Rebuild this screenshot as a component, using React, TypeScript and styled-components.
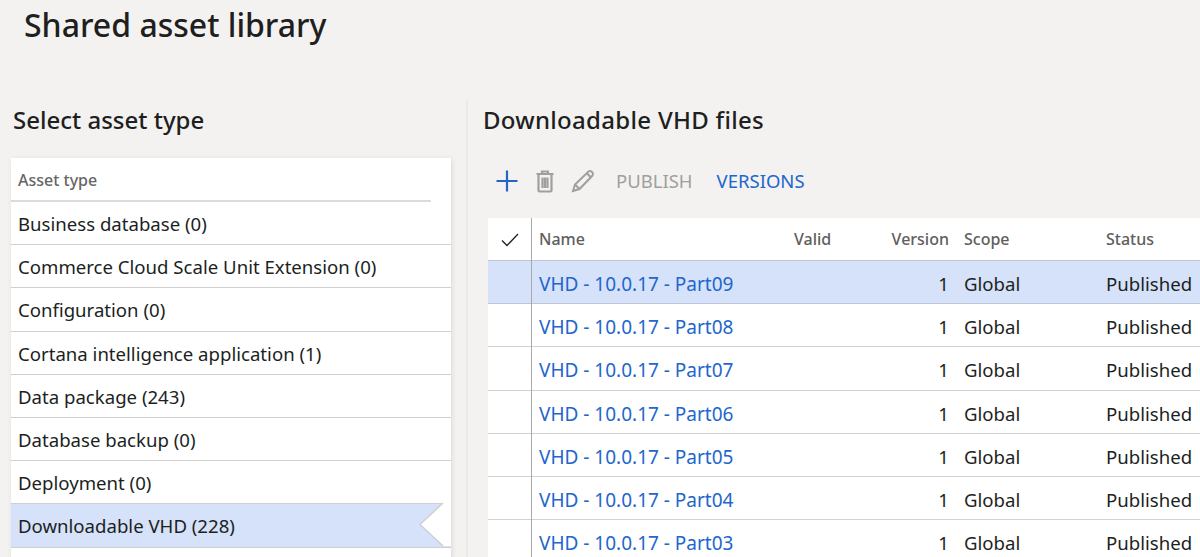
import React from "react";
import styled, { createGlobalStyle } from "styled-components";

const Global = createGlobalStyle`
  html, body { margin: 0; padding: 0; background: #f3f2f1; overflow: hidden; }
  body { font-family: "Noto Sans", "Open Sans", "Liberation Sans", sans-serif; }
`;
const Page = styled.div`
  width: 1200px; height: 557px; overflow: hidden; background: #f3f2f1;
  display: flex; flex-direction: column;
`;
const Title = styled.h1`
  margin: 0; padding: 0 0 0 24px; height: 100px; box-sizing: border-box;
  font-size: 32px; line-height: 50px; font-weight: 500; color: #201f1e;
`;
const Columns = styled.div`
  display: flex; flex: 1; min-height: 0;
`;
const LeftPane = styled.section`
  width: 468px; flex: none; box-sizing: border-box; padding: 0 15px 0 11px;
  border-right: 2px solid #ebe9e7;
`;
const RightPane = styled.section`
  flex: 1; min-width: 0; padding-left: 15px;
`;
const PaneTitle = styled.h2<{ $indent: number; $track?: number }>`
  margin: 0; padding-left: ${p => p.$indent}px; height: 58px;
  font-size: 24px; line-height: 40px; font-weight: 500; color: #201f1e;
  letter-spacing: ${p => p.$track ?? 0}px;
`;
const Card = styled.div`
  background: #fff; box-shadow: 1px 1px 5px rgba(0,0,0,.1);
`;
const ListHead = styled.div`
  height: 44px; margin-right: 20px; box-sizing: border-box; padding-left: 7px;
  border-bottom: 2px solid #dcdbda;
  font-size: 16px; line-height: 44px; font-weight: 500; color: #666;
`;
const ListRow = styled.div<{ $active?: boolean }>`
  position: relative; height: 43.2px; box-sizing: border-box; padding-left: 7px;
  border-bottom: 1.5px solid #cfcfcf;
  font-size: 18.6px; line-height: 44px; color: #201f1e;
  background: ${p => (p.$active ? "#d5e2fa" : "#fff")};
`;
const Notch = styled.svg`
  position: absolute; right: 0; top: -1px;
`;
const Toolbar = styled.div`
  height: 60px; display: flex; align-items: flex-start; padding: 5px 0 0 12px; box-sizing: border-box;
`;
const IconBtn = styled.span<{ $w: number }>`
  display: flex; width: ${p => p.$w}px; justify-content: flex-start; height: 36px; align-items: center;
`;
const TextBtn = styled.span<{ $on?: boolean }>`
  font-size: 18.5px; line-height: 36px; margin-right: 24px;
  color: ${p => (p.$on ? "#2266cc" : "#a19f9d")};
`;
const Grid = styled.div`
  margin-left: 5px; background: #fff;
`;
const GridRow = styled.div<{ $head?: boolean; $sel?: boolean }>`
  display: grid; grid-template-columns: 44px 255px 60px 110px 142px 1fr;
  height: ${p => (p.$head ? "43px" : "43.2px")}; box-sizing: border-box;
  border-bottom: 1.5px solid ${p => (p.$head || p.$sel ? "#bcc6d6" : "#d2d2d2")};
  background: ${p => (p.$sel ? "#d5e2fa" : "#fff")};
`;
const CheckCell = styled.div`
  border-right: 1px solid #a8a8a8; display: flex; align-items: center; justify-content: center;
`;
const HeadCell = styled.div<{ $end?: boolean }>`
  font-size: 16px; line-height: 43px; font-weight: 500; color: #605e5c; white-space: nowrap;
  padding: ${p => (p.$end ? "0 8px 0 0" : "0 0 0 7px")};
  text-align: ${p => (p.$end ? "right" : "left")};
`;
const Cell = styled.div<{ $end?: boolean; $link?: boolean }>`
  font-size: ${p => (p.$link ? "19px" : "18.6px")};
  line-height: ${p => (p.$link ? "46px" : "45px")}; white-space: nowrap;
  color: ${p => (p.$link ? "#2266cc" : "#201f1e")};
  padding: ${p => (p.$end ? "0 8px 0 0" : "0 0 0 7px")};
  text-align: ${p => (p.$end ? "right" : "left")};
`;

const types = [
  "Business database (0)",
  "Commerce Cloud Scale Unit Extension (0)",
  "Configuration (0)",
  "Cortana intelligence application (1)",
  "Data package (243)",
  "Database backup (0)",
  "Deployment (0)",
  "Downloadable VHD (228)",
];
const parts = ["09", "08", "07", "06", "05", "04", "03"];

export default function App() {
  return (
    <Page>
      <Global />
      <Title>Shared asset library</Title>
      <Columns>
        <LeftPane>
          <PaneTitle $indent={2}>Select asset type</PaneTitle>
          <Card>
            <ListHead>Asset type</ListHead>
            {types.map((t, i) => (
              <ListRow key={t} $active={i === 7}>
                {t}
                {i === 7 && (
                  <Notch width="32" height="44" viewBox="0 0 32 44">
                    <path d="M32 0H24L1 21.5 24 43H32Z" fill="#fff" />
                    <path d="M24 0L1 21.5 24 43" fill="none" stroke="#cfcfcf" strokeWidth="1.5" />
                  </Notch>
                )}
              </ListRow>
            ))}
            <ListRow />
          </Card>
        </LeftPane>
        <RightPane>
          <PaneTitle $indent={0} $track={0.3}>Downloadable VHD files</PaneTitle>
          <Toolbar>
            <IconBtn $w={40}>
              <svg width="24" height="24" viewBox="0 0 24 24">
                <path d="M12 1.5V22.5M1.5 12H22.5" stroke="#2266cc" strokeWidth="2.2" fill="none" />
              </svg>
            </IconBtn>
            <IconBtn $w={36}>
              <svg width="20" height="24" viewBox="0 0 20 24" fill="none" stroke="#a19f9d" strokeWidth="2.2">
                <path d="M1.5 5H18.5M7 5V2.5H13V5M3.5 5V21.5Q3.5 22.5 4.5 22.5H15.5Q16.5 22.5 16.5 21.5V5M7.5 8.5V19M10 8.5V19M12.5 8.5V19" />
              </svg>
            </IconBtn>
            <IconBtn $w={45}>
              <svg width="24" height="24" viewBox="0 0 24 24" fill="none" stroke="#a19f9d" strokeWidth="2">
                <path d="M2 22L4 15.5 17.5 2.5Q19 1.5 20.5 2.5L21.5 3.5Q22.5 5 21.5 6.5L8.5 20ZM4 15.5L8.5 20M16 4.5L19.5 8" />
              </svg>
            </IconBtn>
            <TextBtn>PUBLISH</TextBtn>
            <TextBtn $on>VERSIONS</TextBtn>
          </Toolbar>
          <Grid>
            <GridRow $head>
              <CheckCell>
                <svg width="18" height="14" viewBox="0 0 18 14">
                  <path d="M1 7.5L6 12.5 17 1" stroke="#201f1e" strokeWidth="1.3" fill="none" />
                </svg>
              </CheckCell>
              <HeadCell>Name</HeadCell>
              <HeadCell>Valid</HeadCell>
              <HeadCell $end>Version</HeadCell>
              <HeadCell>Scope</HeadCell>
              <HeadCell>Status</HeadCell>
            </GridRow>
            {parts.map((p, i) => (
              <GridRow key={p} $sel={i === 0}>
                <CheckCell />
                <Cell $link>VHD - 10.0.17 - Part{p}</Cell>
                <Cell />
                <Cell $end>1</Cell>
                <Cell>Global</Cell>
                <Cell>Published</Cell>
              </GridRow>
            ))}
          </Grid>
        </RightPane>
      </Columns>
    </Page>
  );
}
